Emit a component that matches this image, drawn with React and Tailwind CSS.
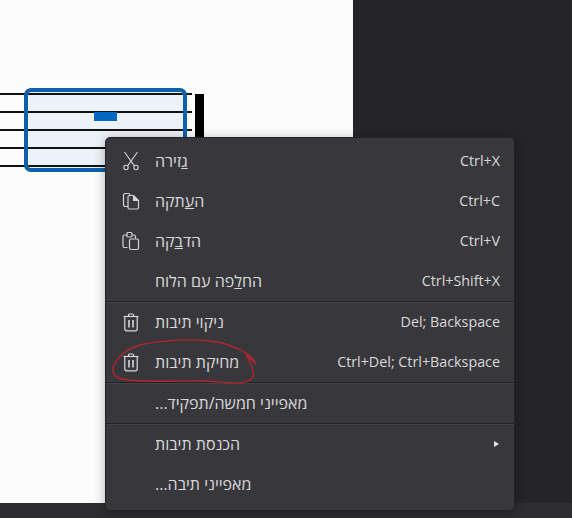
const FONT = { fontFamily: '"Open Sans", "Noto Sans", "Liberation Sans", sans-serif' };

function Scissors() {
  return (
    <svg width="20" height="20" viewBox="0 0 20 20" fill="none" stroke="#d4d4d6" strokeWidth="1.1">
      <path d="M3.5 1 L13.2 14.6 M16.5 1 L6.8 14.6" />
      <circle cx="5" cy="16.5" r="2.2" />
      <circle cx="15" cy="16.5" r="2.2" />
    </svg>
  );
}
function Copy() {
  return (
    <svg width="20" height="20" viewBox="0 0 20 20" fill="none" stroke="#d4d4d6" strokeWidth="1.2" strokeLinejoin="round">
      <path d="M7 15.5 H4.5 Q2.5 15.5 2.5 13.5 V4.5 Q2.5 2.5 4.5 2.5 H7 Q9 2.5 9 4.5" />
      <path d="M7 6 Q7 4.5 8.5 4.5 H12.5 L17.5 9.5 V16.5 Q17.5 18 16 18 H8.5 Q7 18 7 16.5 Z" />
      <path d="M12.5 4.5 V9.5 H17.5" fill="#d4d4d6" />
    </svg>
  );
}
function Paste() {
  return (
    <svg width="20" height="20" viewBox="0 0 20 20" fill="none" stroke="#d4d4d6" strokeWidth="1.2" strokeLinejoin="round">
      <path d="M6.5 16.5 H3.5 Q2 16.5 2 15 V5.5 Q2 4 3.5 4 H6" />
      <path d="M11 4 H13 Q14.5 4 14.5 5.5 V7.5" />
      <rect x="6" y="1.5" width="5" height="4.5" rx="1" />
      <rect x="8.5" y="8" width="9" height="10.5" rx="1.5" />
    </svg>
  );
}
function Trash() {
  return (
    <svg width="20" height="20" viewBox="0 0 20 20" fill="none" stroke="#d8d8da" strokeWidth="1.2" strokeLinejoin="round">
      <path d="M2.5 4.5 H17.5" />
      <path d="M7.5 4.5 V3 Q7.5 2 8.5 2 H11.5 Q12.5 2 12.5 3 V4.5" />
      <path d="M3.8 4.5 V16.8 Q3.8 18.8 5.8 18.8 H14.2 Q16.2 18.8 16.2 16.8 V4.5" />
      <path d="M8 8 V15.5 M12 8 V15.5" strokeWidth="1.6" />
    </svg>
  );
}

function Row({ icon, label, shortcut, arrow }) {
  return (
    <div className="flex items-center h-10 pl-[15px] pr-[14px]">
      <div className="w-5 h-5 flex items-center justify-center shrink-0">{icon}</div>
      <div dir="rtl" className="ml-[14px] text-left text-[16px] leading-5 text-[#d8d8da]">{label}</div>
      <div className="flex-1" />
      {shortcut && <div className="text-[14.3px] leading-5 text-[#d8d8da]">{shortcut}</div>}
      {arrow && <div className="w-0 h-0 mr-[1px] border-y-[3px] border-y-transparent border-l-[5px] border-l-[#e8e8ea]" />}
    </div>
  );
}

function Sep() {
  return <div className="h-px bg-[#242427] shadow-[0_1px_0_#434347]" />;
}

function Staff() {
  const Line = () => <div className="h-[2px] bg-[#111111]" />;
  return (
    <div className="flex items-start pt-[88px]">
      <div className="relative w-[192px] h-[84px]">
        <div className="pt-[5px] flex flex-col gap-[16px]">
          <Line /><Line /><Line /><Line /><Line />
        </div>
        <div className="absolute left-[24px] top-0 w-[163px] h-[84px] rounded-[7px] border-[4px] border-[#0f60aa] bg-[#edf2f8] overflow-hidden flex flex-col gap-[16px] pt-[1px]">
          <Line /><Line /><Line /><Line /><Line />
        </div>
        <div className="absolute left-[94px] top-[24px] w-[23px] h-[9px] bg-[#0067c0]" />
      </div>
      <div className="mt-[6px] ml-[3px] w-[9px] h-[70px] bg-black" />
    </div>
  );
}

export default function App() {
  return (
    <div style={FONT} className="relative w-[572px] h-[518px] overflow-hidden bg-[#2e2e31]">
      <div className="flex h-[503px]">
        <div className="w-[353px] bg-[#fcfcfc]">
          <Staff />
        </div>
        <div className="flex-1 bg-[#252429]" />
      </div>

      <div className="absolute left-[105px] top-[137px] w-[410px] h-[374px] rounded-[5px] bg-[#38383c] border border-[#232326] shadow-[0_2px_12px_rgba(0,0,0,0.3)] pt-[3px]">
        <Row icon={<Scissors />} label={<><u>ג</u>זירה</>} shortcut="Ctrl+X" />
        <Row icon={<Copy />} label={<>ה<u>ע</u>תקה</>} shortcut="Ctrl+C" />
        <Row icon={<Paste />} label={<>הד<u>ב</u>קה</>} shortcut="Ctrl+V" />
        <Row label={<>הח<u>ל</u>פה עם הלוח</>} shortcut="Ctrl+Shift+X" />
        <Sep />
        <Row icon={<Trash />} label="ניקוי תיבות" shortcut="Del; Backspace" />
        <Row icon={<Trash />} label="מחיקת תיבות" shortcut="Ctrl+Del; Ctrl+Backspace" />
        <Sep />
        <Row label="מאפייני חמשה/תפקיד..." />
        <Sep />
        <Row label="הכנסת תיבות" arrow />
        <Row label="מאפייני תיבה..." />
      </div>

      <svg className="absolute left-0 top-0" width="572" height="518" fill="none" stroke="#b3262f" strokeWidth="1.4">
        <path d="M113 368 C116 358 126 349 140 345 C160 340 195 338 218 342 C232 345 245 352 250 356 C253 359 255 361 256 364 C252 360 249 358 246 355 C250 362 255 372 253 377 C250 382 244 383 236 383 C225 383 215 381 200 381 C180 381 150 382 128 380 C118 379 112 376 113 368 Z" />
      </svg>
    </div>
  );
}
